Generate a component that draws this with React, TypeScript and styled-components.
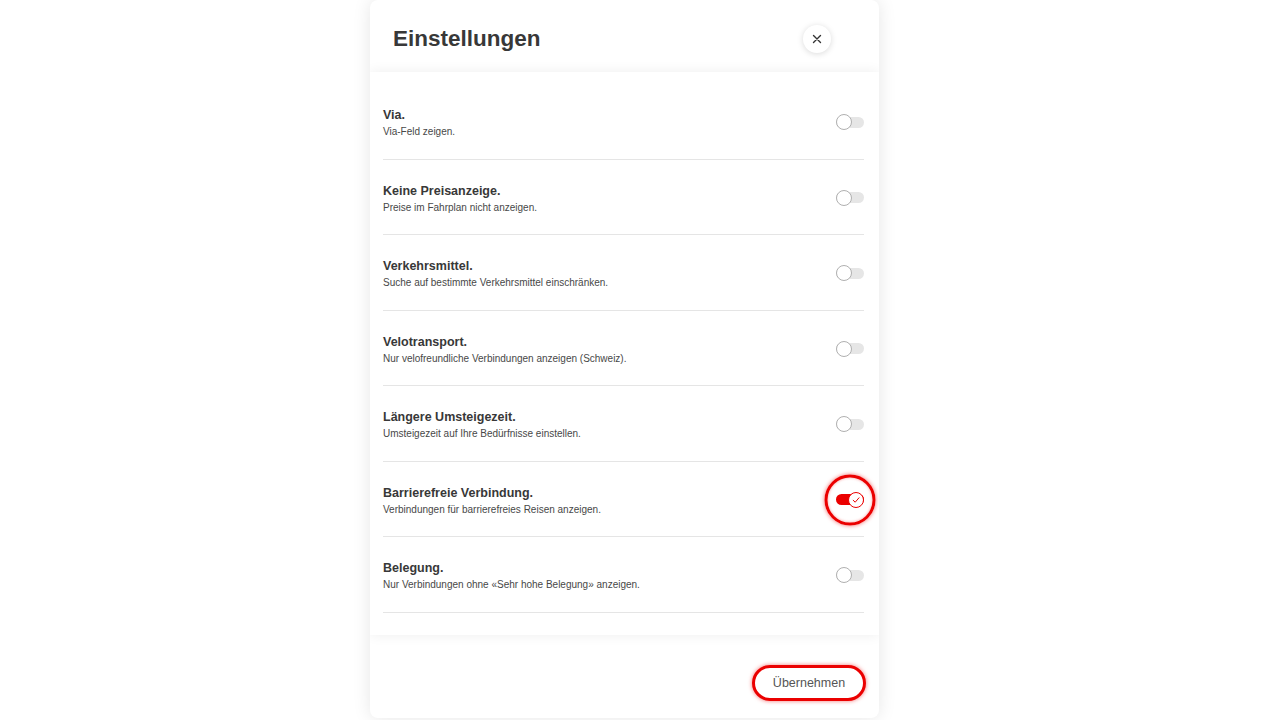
import React, { useState } from "react";
import styled, { createGlobalStyle } from "styled-components";

const Global = createGlobalStyle`
  html, body { margin: 0; padding: 0; background: #ffffff; }
  body { font-family: "Liberation Sans", Arial, Helvetica, sans-serif; color: #333; }
  * { box-sizing: border-box; }
`;

const Page = styled.div`
  width: 1280px;
  height: 720px;
  overflow: hidden;
  display: flex;
  justify-content: flex-start;
  padding-left: 370px;
`;

const Modal = styled.div`
  width: 509px;
  height: 718px;
  background: #fff;
  border-radius: 8px;
  box-shadow: 0 0 18px rgba(0, 0, 0, 0.1);
  display: flex;
  flex-direction: column;
  overflow: hidden;
`;

const Header = styled.div`
  height: 72px;
  flex: none;
  display: flex;
  align-items: center;
  justify-content: space-between;
  padding: 5px 48px 0 23px;
`;

const Title = styled.h1`
  margin: 0;
  font-size: 22.5px;
  font-weight: 700;
  color: #383838;
  letter-spacing: 0;
`;

const CloseButton = styled.button`
  width: 28px;
  height: 28px;
  border-radius: 50%;
  border: none;
  background: #fff;
  box-shadow: 0 1px 6px rgba(0, 0, 0, 0.15);
  display: flex;
  align-items: center;
  justify-content: center;
  padding: 0;
  cursor: pointer;
`;

const Content = styled.div`
  flex: none;
  height: 563px;
  padding: 12px 15px 0 13px;
  background: #fff;
  box-shadow: 0 0 12px rgba(0, 0, 0, 0.07);
  position: relative;
  z-index: 1;
`;

const Row = styled.div`
  height: 75.5px;
  display: flex;
  align-items: center;
  justify-content: space-between;
  border-bottom: 1px solid #e5e5e5;
`;

const TextBlock = styled.div`
  display: flex;
  flex-direction: column;
  gap: 4px;
  padding-top: 4px;
`;

const RowTitle = styled.div`
  font-size: 12.5px;
  font-weight: 700;
  color: #383838;
  line-height: 14px;
`;

const RowDesc = styled.div`
  font-size: 10px;
  color: #484848;
  line-height: 12px;
`;

const ToggleWrap = styled.div<{ $focus: boolean }>`
  position: relative;
  width: 28px;
  height: 16px;
  flex: none;
  margin-top: 2px;
  cursor: pointer;
  &::after {
    content: "";
    display: ${(p) => (p.$focus ? "block" : "none")};
    position: absolute;
    left: 50%;
    top: 50%;
    width: 45px;
    height: 45px;
    transform: translate(-50%, -50%);
    border-radius: 50%;
    border: 3.5px solid #eb0000;
    box-shadow: 0 0 4px rgba(235, 0, 0, 0.6), inset 0 0 3px rgba(235, 0, 0, 0.4);
  }
`;

const Track = styled.div<{ $on: boolean }>`
  position: absolute;
  left: 0;
  right: 0;
  top: 2.5px;
  height: 11px;
  border-radius: 6px;
  background: ${(p) => (p.$on ? "#eb0000" : "#e6e6e6")};
`;

const Knob = styled.div<{ $on: boolean }>`
  position: absolute;
  top: 0;
  left: ${(p) => (p.$on ? "12px" : "0")};
  width: 16px;
  height: 16px;
  border-radius: 50%;
  background: #fff;
  border: 1px solid ${(p) => (p.$on ? "#eb0000" : "#b0b0b0")};
  display: flex;
  align-items: center;
  justify-content: center;
`;

const Footer = styled.div`
  flex: 1;
  display: flex;
  justify-content: flex-end;
  align-items: flex-start;
  padding: 30px 13px 0 0;
`;

const ApplyButton = styled.button`
  width: 114px;
  height: 36px;
  border-radius: 18px;
  background: #fff;
  border: 3.5px solid #eb0000;
  box-shadow: 0 0 4px rgba(235, 0, 0, 0.55);
  font-family: "Liberation Sans", Arial, sans-serif;
  font-size: 12.5px;
  color: #555;
  cursor: pointer;
`;

const settings = [
  { title: "Via.", desc: "Via-Feld zeigen." },
  { title: "Keine Preisanzeige.", desc: "Preise im Fahrplan nicht anzeigen." },
  { title: "Verkehrsmittel.", desc: "Suche auf bestimmte Verkehrsmittel einschränken." },
  { title: "Velotransport.", desc: "Nur velofreundliche Verbindungen anzeigen (Schweiz)." },
  { title: "Längere Umsteigezeit.", desc: "Umsteigezeit auf Ihre Bedürfnisse einstellen." },
  { title: "Barrierefreie Verbindung.", desc: "Verbindungen für barrierefreies Reisen anzeigen." },
  { title: "Belegung.", desc: "Nur Verbindungen ohne «Sehr hohe Belegung» anzeigen." },
];

function Toggle({ on, focus, onClick }: { on: boolean; focus: boolean; onClick: () => void }) {
  return (
    <ToggleWrap $focus={focus} onClick={onClick} role="switch" aria-checked={on}>
      <Track $on={on} />
      <Knob $on={on}>
        {on && (
          <svg width="10" height="10" viewBox="0 0 10 10">
            <path d="M2.2 5.3 L4.2 7.2 L8 2.8" fill="none" stroke="#eb0000" strokeWidth="1" strokeLinecap="round" strokeLinejoin="round" />
          </svg>
        )}
      </Knob>
    </ToggleWrap>
  );
}

export default function App() {
  const [values, setValues] = useState<boolean[]>([false, false, false, false, false, true, false]);
  return (
    <>
      <Global />
      <Page>
        <Modal>
          <Header>
            <Title>Einstellungen</Title>
            <CloseButton aria-label="Schliessen">
              <svg width="10" height="10" viewBox="0 0 10 10">
                <path d="M1.5 1.5 L8.5 8.5 M8.5 1.5 L1.5 8.5" stroke="#333" strokeWidth="1.4" strokeLinecap="round" />
              </svg>
            </CloseButton>
          </Header>
          <Content>
            {settings.map((s, i) => (
              <Row key={s.title}>
                <TextBlock>
                  <RowTitle>{s.title}</RowTitle>
                  <RowDesc>{s.desc}</RowDesc>
                </TextBlock>
                <Toggle
                  on={values[i]}
                  focus={i === 5}
                  onClick={() => setValues((v) => v.map((x, j) => (j === i ? !x : x)))}
                />
              </Row>
            ))}
          </Content>
          <Footer>
            <ApplyButton>Übernehmen</ApplyButton>
          </Footer>
        </Modal>
      </Page>
    </>
  );
}
